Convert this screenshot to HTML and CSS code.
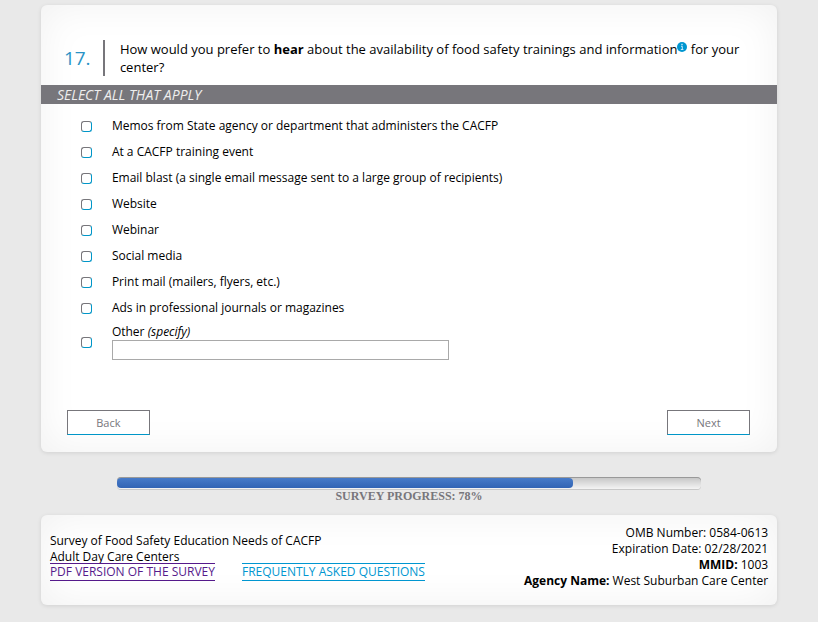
FILE: index.html
```html
<!DOCTYPE html>
<html lang="en">
<head>
    <meta charset="UTF-8">
    <meta name="viewport" content="width=device-width, initial-scale=1.0">
    <title>Survey of Food Safety Education Needs</title>
    <link rel="stylesheet" href="styles.css">
</head>
<body>
    <form class="card question-card">
        <div class="question">
            <div class="question-number">17.</div>
            <div class="question-text" id="questionText">How would you prefer to <b>hear</b> about the availability of food safety trainings and information<svg class="info-icon" viewBox="0 0 10 10" role="img" aria-label="More information"><circle cx="5" cy="5" r="5" fill="#0096d0"/><path d="M4 4.3h1.3v3.2M3.8 7.5h2.6" fill="none" stroke="#c9eafa" stroke-width="1"/><rect x="4.3" y="1.8" width="1.4" height="1.4" fill="#c9eafa"/></svg> for your center?</div>
        </div>
        <div class="instruction">SELECT ALL THAT APPLY</div>

        <div class="options" role="group" aria-labelledby="questionText">
            <div class="option">
                <input type="checkbox" id="memos">
                <label for="memos">Memos from State agency or department that administers the CACFP</label>
            </div>
            <div class="option">
                <input type="checkbox" id="training">
                <label for="training">At a CACFP training event</label>
            </div>
            <div class="option">
                <input type="checkbox" id="email">
                <label for="email">Email blast (a single email message sent to a large group of recipients)</label>
            </div>
            <div class="option">
                <input type="checkbox" id="website">
                <label for="website">Website</label>
            </div>
            <div class="option">
                <input type="checkbox" id="webinar">
                <label for="webinar">Webinar</label>
            </div>
            <div class="option">
                <input type="checkbox" id="social">
                <label for="social">Social media</label>
            </div>
            <div class="option">
                <input type="checkbox" id="print">
                <label for="print">Print mail (mailers, flyers, etc.)</label>
            </div>
            <div class="option">
                <input type="checkbox" id="ads">
                <label for="ads">Ads in professional journals or magazines</label>
            </div>
            <div class="option option-other">
                <input type="checkbox" id="other">
                <div class="other-field">
                    <label for="other">Other <i>(specify)</i></label>
                    <input type="text" class="other-text" aria-label="Other (specify)">
                </div>
            </div>
        </div>

        <div class="buttons">
            <button type="button">Back</button>
            <button type="button">Next</button>
        </div>
    </form>

    <div class="progress">
        <div class="progress-track">
            <div class="progress-bar" style="width: 78%"></div>
        </div>
        <div class="progress-text">SURVEY PROGRESS: 78%</div>
    </div>

    <footer class="card footer">
        <div class="footer-left">
            <div>Survey of Food Safety Education Needs of CACFP<br>Adult Day Care Centers</div>
            <div class="footer-links">
                <a href="#" class="visited">PDF VERSION OF THE SURVEY</a>
                <a href="#">FREQUENTLY ASKED QUESTIONS</a>
            </div>
        </div>
        <div class="footer-right">
            <div>OMB Number: 0584-0613</div>
            <div>Expiration Date: 02/28/2021</div>
            <div><b>MMID:</b> 1003</div>
            <div><b>Agency Name:</b> West Suburban Care Center</div>
        </div>
    </footer>
</body>
</html>
```

FILE: styles.css
```css
* {
    box-sizing: border-box;
}

body {
    font-family: "Segoe UI", "Open Sans", "Noto Sans", sans-serif;
    font-size: 12px;
    background-color: #e9e9e9;
    color: #000;
    margin: 0;
    padding: 5px 5%;
}

.card {
    background-color: #fff;
    border-radius: 6px;
    box-shadow: 0 1px 4px rgba(0, 0, 0, 0.1), inset 0 0 40px rgba(0, 0, 0, 0.06);
}

.question-card {
    padding: 34px 0 17px;
}

.question {
    display: flex;
    align-items: center;
    padding: 0 23px;
}

.question-number {
    flex: none;
    width: 41px;
    font-size: 19px;
    line-height: 36px;
    color: #2a93c6;
    border-right: 2px solid #77767b;
}

.question-text {
    padding: 1px 0 0 15px;
    font-size: 13px;
    line-height: 18px;
}

.info-icon {
    width: 10px;
    height: 10px;
    vertical-align: 2px;
}

.instruction {
    margin-top: 9px;
    padding-left: 16px;
    font-size: 14px;
    line-height: 19px;
    font-style: italic;
    color: #eee;
    background-color: #77767b;
}

.options {
    padding: 9px 40px 0;
}

.option {
    display: flex;
    align-items: center;
    gap: 20px;
    line-height: 26px;
}

.option-other {
    padding-top: 3px;
    line-height: 16px;
}

input[type="checkbox"] {
    appearance: none;
    flex: none;
    width: 11px;
    height: 11px;
    margin: 0;
    background-color: #fff;
    border: 1px solid #77767b;
    border-right-color: #0096c8;
    border-bottom-color: #0096c8;
    border-radius: 3px;
}

input[type="checkbox"]:checked {
    background-color: #0096c8;
}

.other-field {
    display: flex;
    flex-direction: column;
    flex: 0 1 337px;
}

.other-text {
    width: 100%;
    height: 20px;
    padding: 0 4px;
    font: inherit;
    background-color: #fff;
    border: 1px solid #a9a9a9;
}

.buttons {
    display: flex;
    justify-content: space-between;
    margin-top: 50px;
    padding: 0 27px 0 26px;
}

button {
    width: 83px;
    height: 25px;
    padding: 0;
    font-family: inherit;
    font-size: 11px;
    color: #77767b;
    background-color: #fff;
    border: 1px solid #77767b;
    border-bottom-color: #0096c8;
    cursor: pointer;
}

.progress {
    width: 584px;
    max-width: 100%;
    margin: 25px auto 11px;
}

.progress-track {
    height: 12px;
    padding-top: 1px;
    border-radius: 4px;
    background: linear-gradient(#c4c4c4, #f4f4f4);
    box-shadow: inset 0 1px 0 #999, 0 1px 0 #c8c8c8;
}

.progress-bar {
    height: 10px;
    border-radius: 4px;
    background: linear-gradient(#477bc9, #3264b4);
}

.progress-text {
    font-family: "Liberation Serif", serif;
    font-size: 12px;
    font-weight: bold;
    line-height: 15px;
    text-align: center;
    color: #77767b;
}

.footer {
    display: flex;
    align-items: flex-start;
    justify-content: space-between;
    padding: 10px 9px 16px;
    line-height: 16px;
}

.footer-left {
    padding-top: 8px;
}

.footer-links {
    display: flex;
    gap: 27px;
    margin-top: -2px;
}

.footer-links a {
    color: #0096d0;
    text-decoration: none;
    border-top: 1px solid;
    border-bottom: 1px solid;
}

.footer-links .visited {
    color: #551a8b;
}

.footer-right {
    text-align: right;
}
```
